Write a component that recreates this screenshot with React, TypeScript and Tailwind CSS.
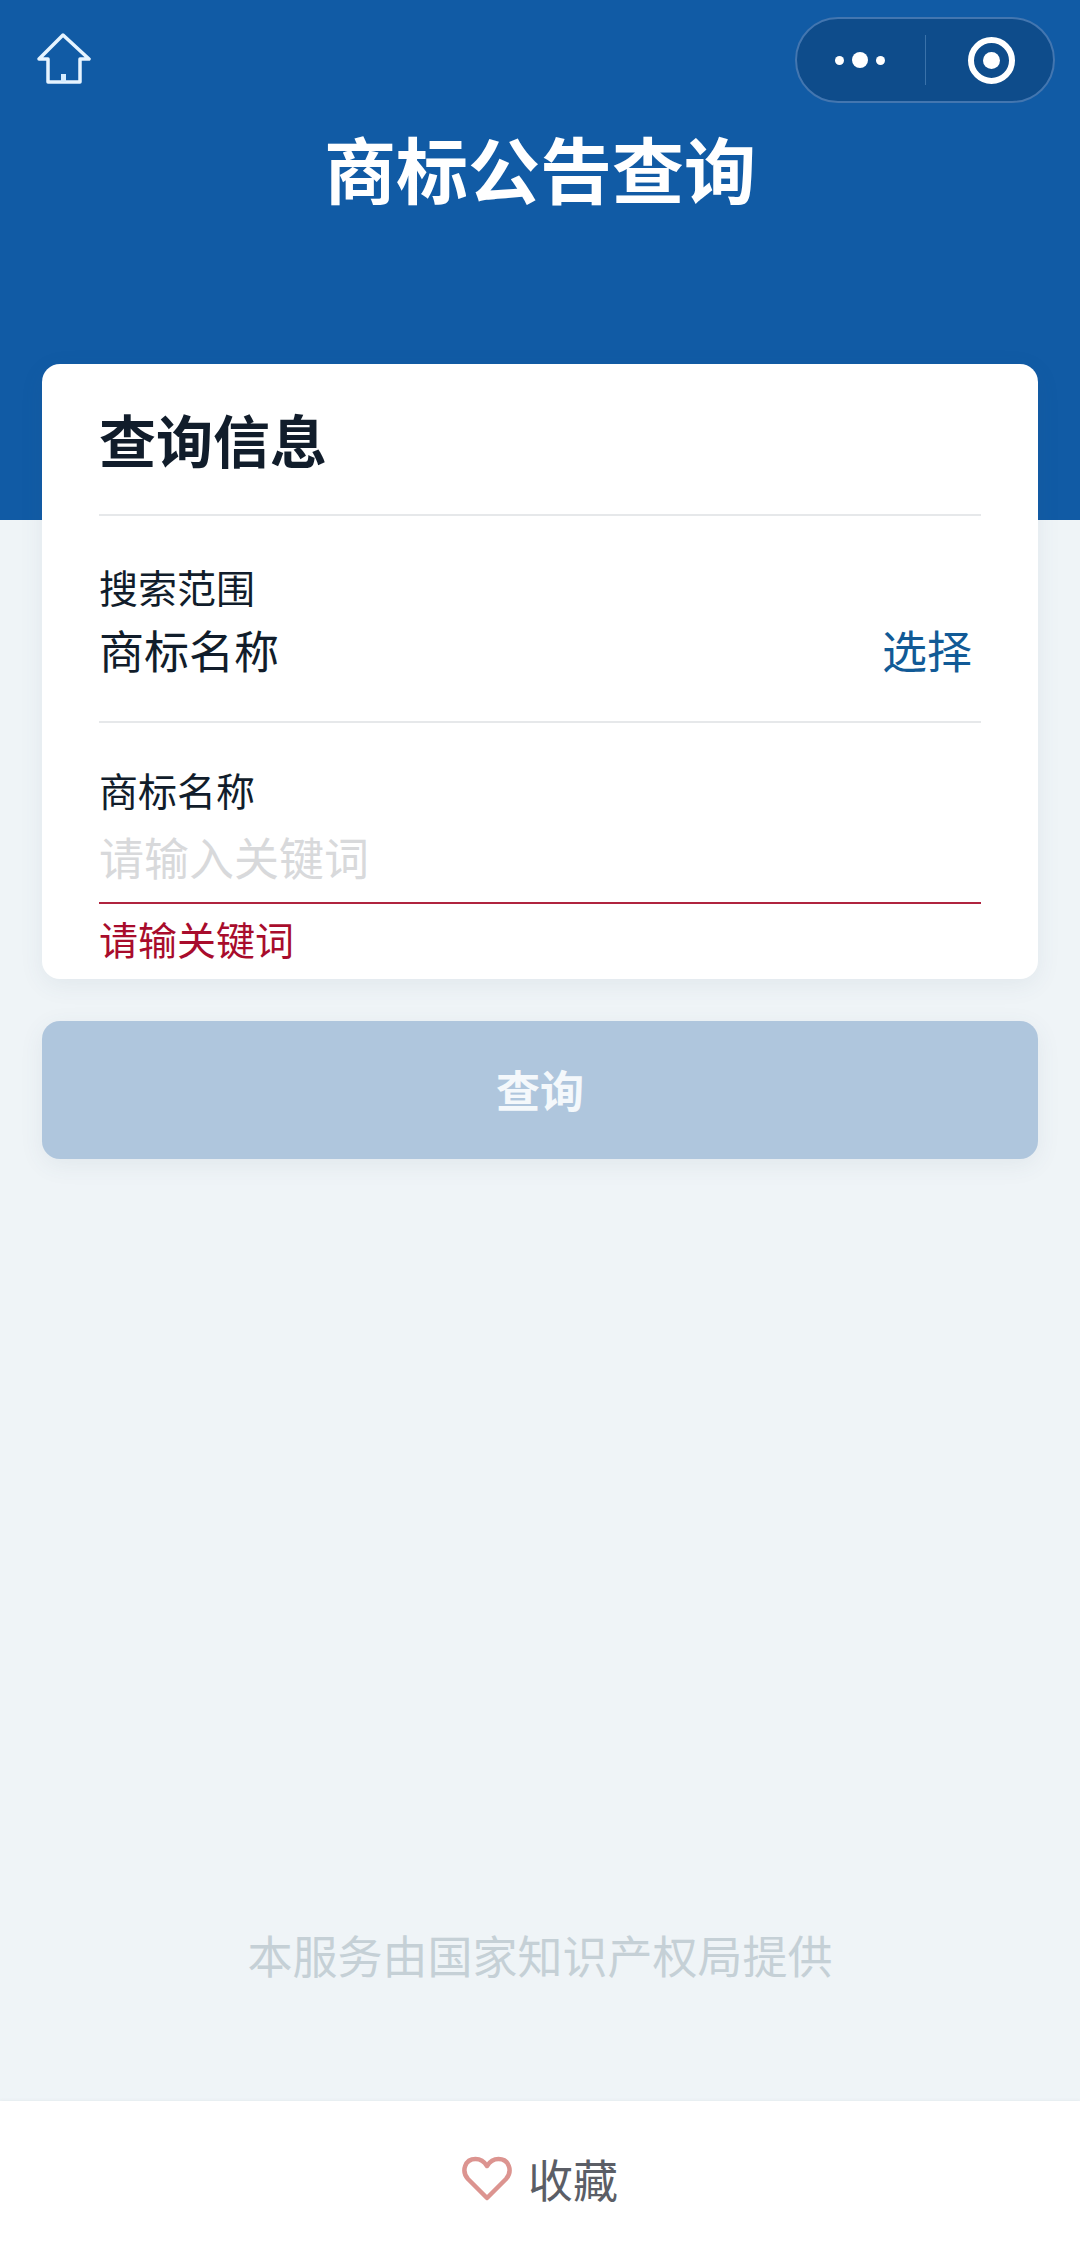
const cjk = "font-['Noto_Sans_CJK_SC','Liberation_Sans',sans-serif]";

export default function App() {
  return (
    <div className={`relative flex h-[2260px] w-[1080px] flex-col overflow-hidden bg-[#eff4f7] ${cjk}`}>
      {/* Blue header */}
      <header className="relative h-[520px] shrink-0 bg-[#115ba5]">
        <div className="flex items-start justify-between pl-[37px] pr-[25px] pt-[17px]">
          <svg className="mt-[16px] h-[52px] w-[54px]" viewBox="0 0 54 52" fill="none" stroke="#e6f4ff" strokeWidth="3.5" strokeLinejoin="round" strokeLinecap="round">
            <path d="M26 2 L52 26 L43 26 L43 49 L11 49 L11 26 L2 26 Z" />
            <rect x="24" y="41" width="5" height="8" fill="#d5ecff" stroke="none" />
          </svg>
          <div className="flex h-[86px] w-[260px] items-center rounded-full border-2 border-[#4376b0] bg-[#0e4c8b]">
            <div className="flex w-[128px] items-center justify-center gap-[8px] pr-[2px]">
              <span className="h-[9px] w-[9px] rounded-full bg-white" />
              <span className="h-[16px] w-[16px] rounded-full bg-white" />
              <span className="h-[9px] w-[9px] rounded-full bg-white" />
            </div>
            <div className="h-[50px] w-px bg-[#3a72aa]" />
            <div className="flex flex-1 items-center justify-center pl-[4px]">
              <div className="flex h-[47px] w-[47px] items-center justify-center rounded-full border-[6px] border-white">
                <span className="h-[17px] w-[17px] rounded-full bg-white" />
              </div>
            </div>
          </div>
        </div>
        <h1 className="mt-[18px] text-center text-[72px] font-bold leading-[92px] text-white">商标公告查询</h1>
      </header>

      {/* Form card */}
      <section className="relative z-10 mx-[42px] -mt-[156px] h-[615px] shrink-0 rounded-[18px] bg-white px-[57px] shadow-[0_6px_24px_rgba(60,90,120,0.08)]">
        <h2 className="flex h-[152px] items-center border-b-2 border-[#e6e8ea] text-[57px] font-bold text-[#111d2b]">查询信息</h2>
        <div className="h-[207px] border-b-2 border-[#e6e8ea] pt-[47px]">
          <div className="text-[39px] leading-[46px] text-[#111d2b]">搜索范围</div>
          <div className="mt-[9px] flex items-center justify-between pr-[9px]">
            <span className="text-[45px] leading-[64px] text-[#111d2b]">商标名称</span>
            <span className="text-[45px] leading-[64px] text-[#115a96]">选择</span>
          </div>
        </div>
        <div className="pt-[43px]">
          <div className="text-[39px] leading-[46px] text-[#111d2b]">商标名称</div>
          <div className="mt-[15px] h-[77px] border-b-2 border-[#b0243f] text-[45px] leading-[60px] text-[#d8d9db]">请输入关键词</div>
          <div className="mt-[11px] text-[39px] leading-[46px] text-[#a80c2c]">请输关键词</div>
        </div>
      </section>

      {/* Submit button */}
      <div className="mx-[42px] mt-[42px] flex h-[138px] shrink-0 items-center justify-center rounded-[18px] bg-[#afc6dd] pb-[3px] text-[44px] font-bold text-[#f4f8fb] shadow-[0_6px_24px_rgba(60,90,120,0.08)]">查询</div>

      <div className="flex-1" />

      <p className="mb-[116px] text-center text-[45px] leading-[60px] text-[#c5d0d6]">本服务由国家知识产权局提供</p>

      {/* Bottom bar */}
      <footer className="flex h-[159px] shrink-0 items-center justify-center gap-[16px] bg-white pb-[3px] shadow-[0_-1px_3px_rgba(60,90,120,0.05)]">
        <svg className="h-[46px] w-[50px]" viewBox="0 0 50 46" fill="none" stroke="#dc9490" strokeWidth="4.5" strokeLinejoin="round">
          <path d="M25 42 L6 23 C-1 15 3 3 13.5 3 C18.5 3 22.5 6 25 10 C27.5 6 31.5 3 36.5 3 C47 3 51 15 44 23 Z" />
        </svg>
        <span className="text-[45px] leading-[60px] text-[#5b5e66]">收藏</span>
      </footer>
    </div>
  );
}
